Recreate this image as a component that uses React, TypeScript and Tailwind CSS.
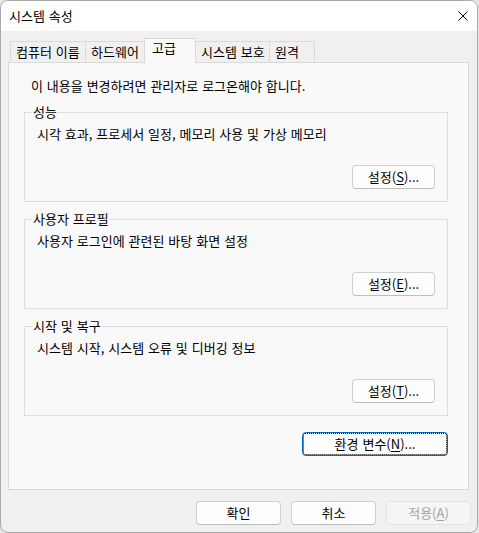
import React from "react";

const FONT = { fontFamily: '"Noto Sans CJK KR", "Noto Sans", sans-serif' };

function Btn({ children, w = "w-[83px]", disabled = false }: { children: React.ReactNode; w?: string; disabled?: boolean }) {
  return (
    <div
      className={`${w} h-[24px] rounded-[4px] border flex items-center justify-center text-[13px] leading-[16px] ${
        disabled
          ? "border-[#e3e3e3] bg-[#f5f5f5] text-[#a3a3a3]"
          : "border-[#d0d0d0] border-b-[#bcbcbc] bg-[#fdfdfd] text-black"
      }`}
    >
      {children}
    </div>
  );
}

function U({ children }: { children: React.ReactNode }) {
  return <span className="underline underline-offset-[2px] decoration-1">{children}</span>;
}

function Group({ title, text, btn }: { title: string; text: string; btn: React.ReactNode }) {
  return (
    <fieldset className="w-[424px] border border-[#dcdcdc] pl-[7px] pr-[12px] pt-[6px] pb-[12px]">
      <legend className="px-[1px] text-[13px] leading-[16px] text-black">{title}</legend>
      <div className="pl-[5px] text-[13px] leading-[16px] text-black">{text}</div>
      <div className="mt-[23px] flex justify-end">
        <Btn>{btn}</Btn>
      </div>
    </fieldset>
  );
}

export default function App() {
  const tabs = [
    { label: "컴퓨터 이름", w: "w-[76px]" },
    { label: "하드웨어", w: "w-[60px]" },
    { label: "고급", w: "w-[52px]", sel: true },
    { label: "시스템 보호", w: "w-[75px]" },
    { label: "원격", w: "w-[46px]" },
  ];
  return (
    <div className="w-[479px] h-[533px] bg-[#e6e6e6] [word-spacing:1px]" style={FONT}>
      <div className="w-[478px] h-[533px] border border-[#a9a9a9] rounded-[8px] overflow-hidden flex flex-col bg-[#f0f0f0]">
        <div className="h-[30px] bg-white flex items-center justify-between pl-[8px] pr-[9px] shrink-0">
          <span className="text-[13px] leading-[16px] text-black">시스템 속성</span>
          <svg width="10" height="10" viewBox="0 0 10 10">
            <path d="M0.5 0.5 L9.5 9.5 M9.5 0.5 L0.5 9.5" stroke="#000" strokeWidth="1" fill="none" />
          </svg>
        </div>
        <div className="flex-1 flex flex-col pt-[7px]">
          <div className="ml-[9px] flex items-end h-[24px]">
            {tabs.map((t, i) => (
              <div
                key={t.label}
                className={`${t.w} ${i > 0 ? "-ml-[1px]" : ""} border border-b-0 border-[#d9d9d9] text-[13px] leading-[16px] text-black flex whitespace-nowrap ${
                  t.sel
                    ? "h-[25px] -mb-[1px] bg-[#f9f9f9] relative z-10 items-start pt-[1px] pl-[7px]"
                    : "h-[21px] bg-[#f0f0f0] items-center pl-[5px]"
                }`}
              >
                {t.label}
              </div>
            ))}
          </div>
          <div className="ml-[7px] w-[461px] h-[428px] border border-[#d9d9d9] bg-[#f9f9f9] pt-[15px] pl-[15px] flex flex-col">
            <div className="pl-[7px] text-[13px] leading-[16px] text-black">이 내용을 변경하려면 관리자로 로그온해야 합니다.</div>
            <div className="mt-[10px] flex flex-col gap-[9px]">
              <Group title="성능" text="시각 효과, 프로세서 일정, 메모리 사용 및 가상 메모리" btn={<>설정(<U>S</U>)...</>} />
              <Group title="사용자 프로필" text="사용자 로그인에 관련된 바탕 화면 설정" btn={<>설정(<U>E</U>)...</>} />
              <Group title="시작 및 복구" text="시스템 시작, 시스템 오류 및 디버깅 정보" btn={<>설정(<U>T</U>)...</>} />
            </div>
            <div className="mt-[16px] w-[424px] flex justify-end">
              <div className="w-[146px] h-[24px] rounded-[4px] border border-[#0067c0] bg-[#fdfdfd]">
                <div className="w-full h-full border border-dotted border-black rounded-[2px] flex items-center justify-center text-[13px] leading-[16px] text-black">
                  환경 변수(<U>N</U>)...
                </div>
              </div>
            </div>
          </div>
          <div className="mt-[11px] flex justify-end gap-[10px] pr-[6px]">
            <Btn w="w-[85px]">확인</Btn>
            <Btn w="w-[85px]">취소</Btn>
            <Btn w="w-[85px]" disabled>
              적용(<U>A</U>)
            </Btn>
          </div>
        </div>
      </div>
    </div>
  );
}
